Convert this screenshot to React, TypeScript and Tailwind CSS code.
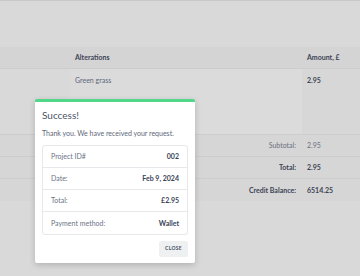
import React from "react";

const rows = [
  { label: "Project ID#", value: "002" },
  { label: "Date:", value: "Feb 9, 2024" },
  { label: "Total:", value: "£2.95" },
  { label: "Payment method:", value: "Wallet" },
];

export default function App() {
  return (
    <div
      className="relative w-[360px] h-[276px] overflow-hidden bg-[#d9d9d9] text-[7px] text-[#3b4354]"
      style={{ fontFamily: "Lato, 'Open Sans', sans-serif" }}
    >
      {/* Dimmed page behind */}
      <div className="h-px bg-[#c9c9c9]" />
      <div className="h-[46px]" />

      {/* Table header */}
      <div className="flex h-[22px] items-center bg-[#d4d4d4] border-b border-[#cdcdcd] font-bold">
        <div className="w-[70px]" />
        <div className="w-[232px] pl-[5px]">Alterations</div>
        <div className="flex-1 pl-[5px]">Amount, £</div>
      </div>

      {/* Row */}
      <div className="flex h-[66px] border-b border-[#cdcdcd]">
        <div className="w-[70px]" />
        <div className="w-[232px] bg-[#dbdbdb] pl-[5px] pt-[6px] text-[#60667a]">Green grass</div>
        <div className="flex-1 bg-[#d7d7d7] pl-[5px] pt-[6px] font-bold">2.95</div>
      </div>

      {/* Summary */}
      <div className="bg-[#d6d6d6]">
        <div className="flex h-[22px] items-center border-b border-[#cdcdcd]">
          <div className="w-[297px] text-right pr-[1px] text-[#6b7080]">Subtotal:</div>
          <div className="pl-[10px] text-[#6b7080]">2.95</div>
        </div>
        <div className="flex h-[22px] items-center border-b border-[#cdcdcd] font-bold">
          <div className="w-[297px] text-right pr-[1px]">Total:</div>
          <div className="pl-[10px]">2.95</div>
        </div>
        <div className="flex h-[22px] items-center font-bold">
          <div className="w-[297px] text-right pr-[1px]">Credit Balance:</div>
          <div className="pl-[10px]">6514.25</div>
        </div>
      </div>

      {/* Success modal */}
      <div className="absolute left-[35px] top-[99px] w-[160px] bg-white rounded-[2px] border-t-[3px] border-[#52d68a] shadow-[0_2px_6px_rgba(0,0,0,0.18)] px-[7px] pt-[7px] pb-[6px]">
        <div className="text-[10px] leading-[12px] text-[#4a5468]">Success!</div>
        <div className="mt-[8px] text-[7px] leading-[9px] text-[#5d6679]">
          Thank you. We have received your request.
        </div>
        <div className="mt-[7px] border border-[#e6e8eb] rounded-[3px]">
          {rows.map((r, i) => (
            <div
              key={r.label}
              className={`flex h-[22px] items-center justify-between px-[8px] ${
                i < rows.length - 1 ? "border-b border-[#e6e8eb]" : ""
              }`}
            >
              <span className="text-[#6b7385]">{r.label}</span>
              <span className="font-bold text-[#3a4357]">{r.value}</span>
            </div>
          ))}
        </div>
        <div className="mt-[6px] flex justify-end">
          <button className="h-[16px] w-[29px] rounded-[2px] bg-[#eef0f1] text-[5px] font-bold tracking-[0.3px] text-[#4a5264]">
            CLOSE
          </button>
        </div>
      </div>
    </div>
  );
}
